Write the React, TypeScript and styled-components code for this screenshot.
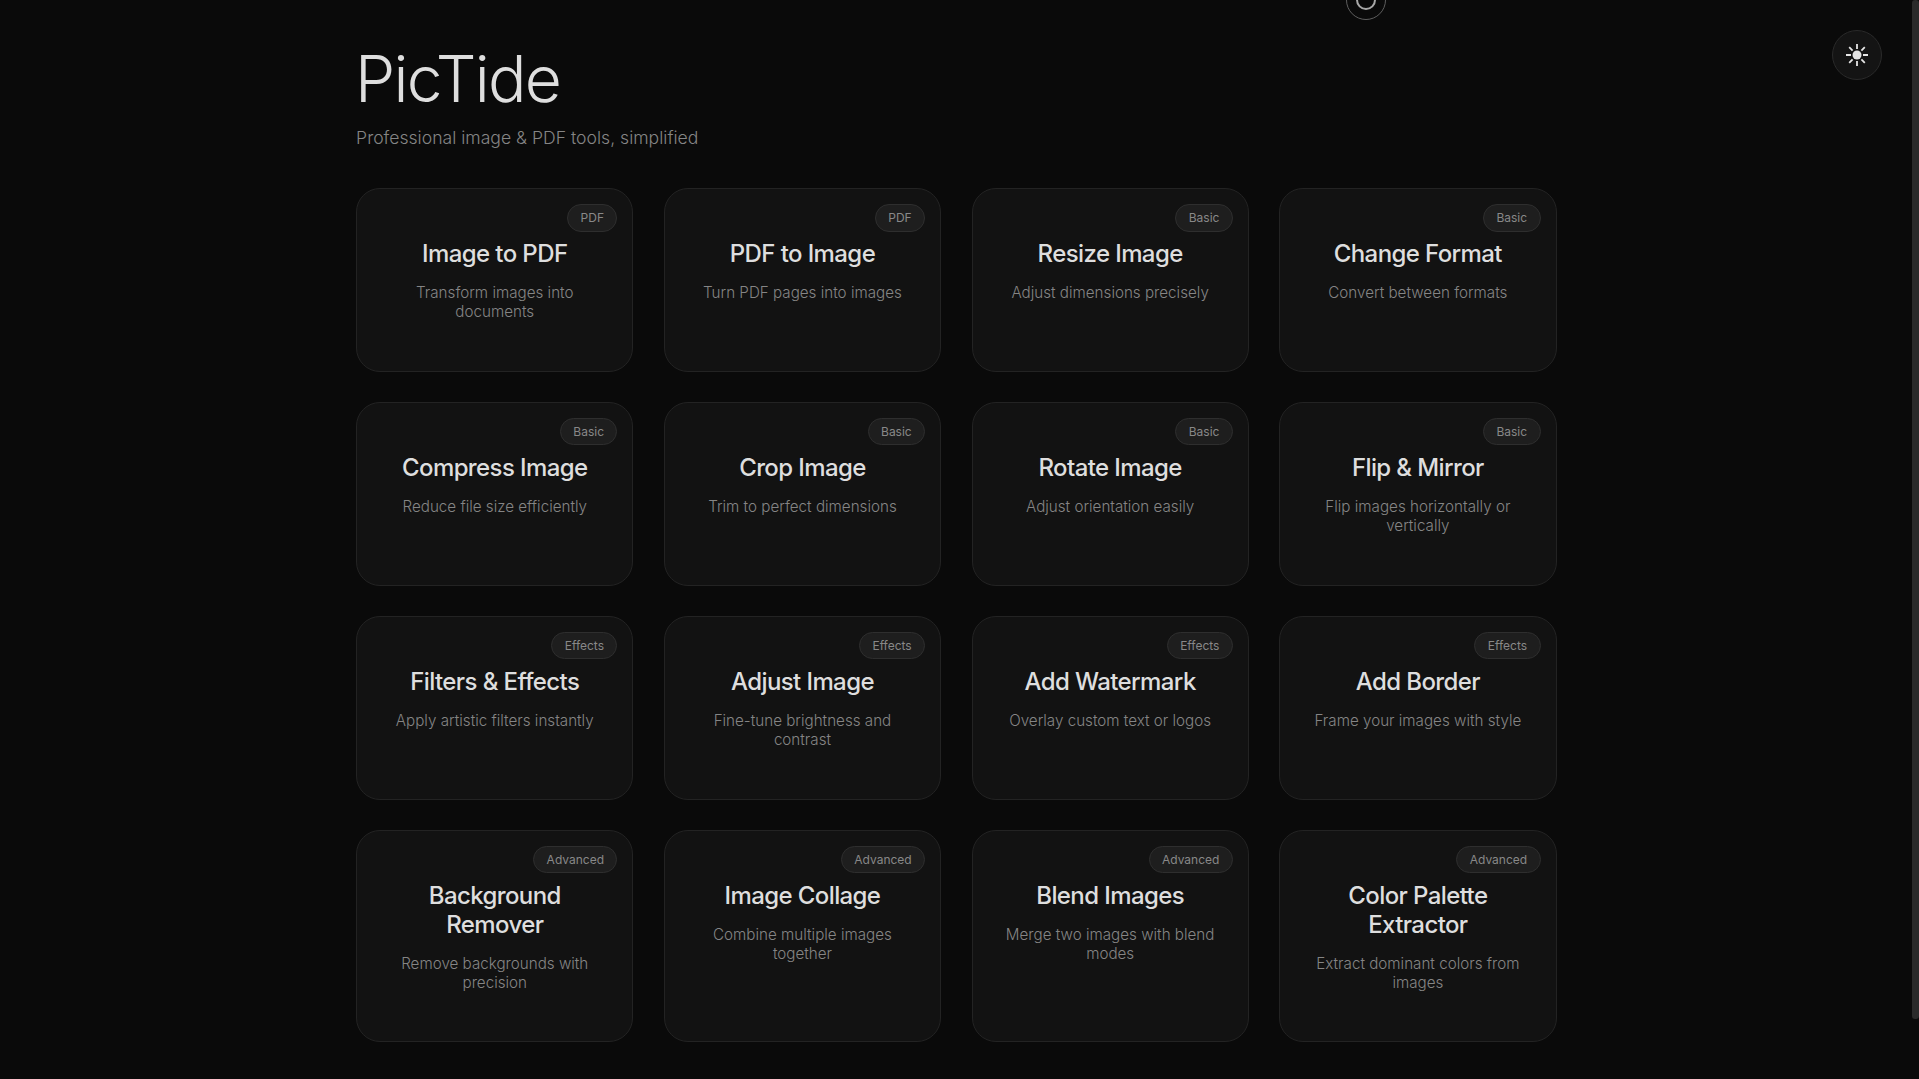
import styled, { createGlobalStyle } from 'styled-components';

interface Tool {
    title: string;
    description: string;
    category: 'PDF' | 'Basic' | 'Effects' | 'Advanced';
}

const tools: Tool[] = [
    { title: 'Image to PDF', description: 'Transform images into documents', category: 'PDF' },
    { title: 'PDF to Image', description: 'Turn PDF pages into images', category: 'PDF' },
    { title: 'Resize Image', description: 'Adjust dimensions precisely', category: 'Basic' },
    { title: 'Change Format', description: 'Convert between formats', category: 'Basic' },
    { title: 'Compress Image', description: 'Reduce file size efficiently', category: 'Basic' },
    { title: 'Crop Image', description: 'Trim to perfect dimensions', category: 'Basic' },
    { title: 'Rotate Image', description: 'Adjust orientation easily', category: 'Basic' },
    { title: 'Flip & Mirror', description: 'Flip images horizontally or vertically', category: 'Basic' },
    { title: 'Filters & Effects', description: 'Apply artistic filters instantly', category: 'Effects' },
    { title: 'Adjust Image', description: 'Fine-tune brightness and contrast', category: 'Effects' },
    { title: 'Add Watermark', description: 'Overlay custom text or logos', category: 'Effects' },
    { title: 'Add Border', description: 'Frame your images with style', category: 'Effects' },
    { title: 'Background Remover', description: 'Remove backgrounds with precision', category: 'Advanced' },
    { title: 'Image Collage', description: 'Combine multiple images together', category: 'Advanced' },
    { title: 'Blend Images', description: 'Merge two images with blend modes', category: 'Advanced' },
    { title: 'Color Palette Extractor', description: 'Extract dominant colors from images', category: 'Advanced' },
];

const SunIcon = () => (
    <svg width="24" height="24" viewBox="0 0 24 24" fill="none" stroke="#e5e5e5" strokeWidth="1.8">
        <circle cx="12" cy="12" r="4.5" fill="#e5e5e5" stroke="none" />
        <path d="M12 1v5M12 18v5M1 12h5M18 12h5M4.2 4.2l3.4 3.4M16.4 16.4l3.4 3.4M4.2 19.8l3.4-3.4M16.4 7.6l3.4-3.4" />
    </svg>
);

const App = () => {
    return (
        <>
            <GlobalStyle />
            <ScrollThumb />
            <CursorOuter>
                <CursorInner />
            </CursorOuter>
            <ThemeButton aria-label="Toggle theme">
                <SunIcon />
            </ThemeButton>
            <Container>
                <Header>
                    <Logo>PicTide</Logo>
                    <Tagline>Professional image &amp; PDF tools, simplified</Tagline>
                </Header>
                <ToolGrid>
                    {tools.map((tool) => (
                        <ToolCard key={tool.title}>
                            <Badge>{tool.category}</Badge>
                            <ToolTitle>{tool.title}</ToolTitle>
                            <ToolDescription>{tool.description}</ToolDescription>
                        </ToolCard>
                    ))}
                </ToolGrid>
            </Container>
        </>
    );
};

const GlobalStyle = createGlobalStyle`
    * {
        box-sizing: border-box;
    }

    html {
        background-color: #0a0a0a;
    }

    body {
        margin: 0;
        padding-right: 6.4px;
        background-color: #0a0a0a;
        color: #e0e0e0;
        font-family: Inter, 'Liberation Sans', sans-serif;
    }
`;

const ScrollThumb = styled.div`
    position: fixed;
    top: 0;
    right: 0;
    width: 7px;
    height: 1019px;
    background-color: #2a2a2a;
    border-radius: 3px;
`;

const CursorOuter = styled.div`
    position: fixed;
    top: -20px;
    left: 1346px;
    width: 40px;
    height: 40px;
    display: flex;
    align-items: center;
    justify-content: center;
    border: 1.5px solid #5f5f5f;
    border-radius: 50%;
`;

const CursorInner = styled.div`
    width: 20px;
    height: 20px;
    border: 2px solid #a8a8a8;
    border-radius: 50%;
`;

const ThemeButton = styled.button`
    position: fixed;
    top: 30px;
    right: 37px;
    width: 50px;
    height: 50px;
    padding: 0;
    display: flex;
    align-items: center;
    justify-content: center;
    background-color: #141414;
    border: 1px solid #2a2a2a;
    border-radius: 50%;
`;

const Container = styled.main`
    width: 1200.4px;
    margin: 0 auto;
    padding: 40px 0 100px;
`;

const Header = styled.header`
    margin-bottom: 40px;
`;

const Logo = styled.h1`
    margin: 0 0 0 -1px;
    font-size: 64px;
    font-weight: 280;
    line-height: 77px;
    letter-spacing: -0.027em;
    color: #dedede;
`;

const Tagline = styled.p`
    margin: 10px 0 0;
    font-size: 17.6px;
    font-weight: 300;
    line-height: 21px;
    color: #858585;
`;

const ToolGrid = styled.div`
    display: grid;
    grid-template-columns: repeat(4, 1fr);
    gap: 30.4px;
`;

const ToolCard = styled.article`
    position: relative;
    padding: 51px 32px 49.8px;
    text-align: center;
    background-color: #121212;
    border: 1px solid #232323;
    border-radius: 24px;
`;

const Badge = styled.span`
    position: absolute;
    top: 15px;
    right: 15px;
    height: 27.5px;
    padding: 0 12.4px;
    display: flex;
    align-items: center;
    font-size: 12px;
    font-weight: 400;
    color: #888888;
    background-color: #1e1e1e;
    border: 1px solid #2e2e2e;
    border-radius: 20px;
`;

const ToolTitle = styled.h2`
    margin: 0 0 14px;
    font-size: 24px;
    font-weight: 450;
    line-height: 28.8px;
    letter-spacing: -0.025em;
    color: #dedede;
`;

const ToolDescription = styled.p`
    margin: 0;
    font-size: 15.2px;
    font-weight: 300;
    line-height: 19px;
    color: #858585;
`;

export default App;
